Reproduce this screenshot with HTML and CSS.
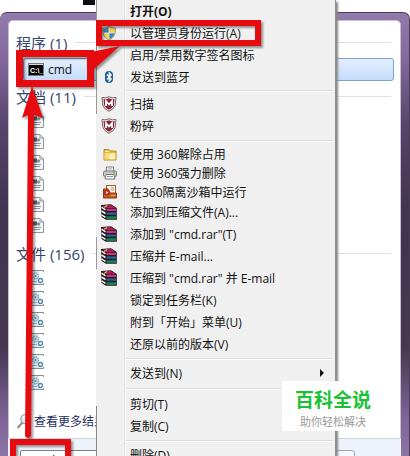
FILE: index.html
```html
<!DOCTYPE html>
<html lang="zh-CN">
<head>
<meta charset="utf-8">
<meta name="viewport" content="width=device-width, initial-scale=1">
<title>cmd</title>
<link rel="stylesheet" href="styles.css">
</head>
<body>
<svg class="defs" aria-hidden="true">
  <symbol id="uac" viewBox="0 0 16 16">
    <path d="M8 1C6 2.500 4 3 1.500 3 1.500 9 3 13 8 15 13 13 14.500 9 14.500 3 12 3 10 2.500 8 1Z" fill="#f3d23c" stroke="#8a97a5"/>
    <path d="M8 2C6 3.300 4 3.700 2.300 3.800L2.600 8H8Z" fill="#3b7cc2"/>
    <path d="M8 8H13.400C12.800 11 11 13 8 14.200Z" fill="#3b7cc2"/>
    <path d="M2.600 8H13.400M8 2V14" stroke="#e8eef2" stroke-width=".8"/>
  </symbol>
  <symbol id="bluetooth" viewBox="0 0 16 16">
    <rect x="4" y="2" width="8" height="12" rx="4" fill="#1d5c94"/>
    <path d="M5.800 5.500 10.300 10 8.200 12.200V3.800L10.300 6 5.800 10.500" fill="none" stroke="#fff" stroke-width="1.200"/>
  </symbol>
  <symbol id="shield" viewBox="0 0 16 16">
    <path d="M1 1.500Q4.500 2.500 8 .8 11.500 2.500 15 1.500L14 10Q12.500 13 8 15.300 3.500 13 2 10Z" fill="#f2e9ea" stroke="#776568"/>
    <path d="M2.500 3Q5.500 3.500 8 2.300 10.500 3.500 13.500 3L12.800 9.500Q11.500 12 8 13.800 4.500 12 3.200 9.500Z" fill="#84283a"/>
    <path d="M5 10V5L8 8.500 11 5V10" fill="none" stroke="#fff" stroke-width="1.700"/>
  </symbol>
  <symbol id="folder" viewBox="0 0 16 16">
    <path d="M2 3.500H7L8.500 5H14V14H2Z" fill="#e5b740" stroke="#bd8f2c"/>
    <path d="M2.500 7H13.500V13.500H2.500Z" fill="#f6db77"/>
    <circle cx="10" cy="10.500" r="2" fill="none" stroke="#fffbe0" stroke-width="1.400"/>
    <path d="M8 10Q8.500 7.500 11 7.500M3 5.500H7" fill="none" stroke="#fff3b5"/>
  </symbol>
  <symbol id="printer" viewBox="0 0 16 16">
    <path d="M4.500 6V2H11.500V6" fill="#fff" stroke="#777"/>
    <rect x="1.500" y="6" width="13" height="5.500" rx="1.500" fill="#c9c9c6" stroke="#777"/>
    <path d="M4 9.500H12L13 14H3Z" fill="#fff" stroke="#777"/>
    <path d="M5 11.500H11M6 4H10" stroke="#999"/><path d="M11 7.800H13" stroke="#58a354"/>
  </symbol>
  <symbol id="sandbox" viewBox="0 0 16 16">
    <path d="M4.500 1.500H13.500V11H4.500Z" fill="#fff6e6" stroke="#9a5a2a"/>
    <path d="M9 4H12M9 6H12" stroke="#c78853"/>
    <path d="M1.500 5H6L8 9H14.500V14H1.500Z" fill="#c0601e" stroke="#853814"/>
    <circle cx="5" cy="8.500" r="3" fill="#c5231b"/><path d="M4 7 6.500 8.500 4 10Z" fill="#fff"/>
    <path d="M9 11.500H13.500" stroke="#e8a050"/>
  </symbol>
  <symbol id="rar" viewBox="0 0 16 16">
    <path d="M0 1 10 .3 15.800 4V15.800H5L.5 13Z" fill="#201b25"/>
    <path d="M1.500 1.500 10 1 14.500 4H5.500Z" fill="#a81f55"/>
    <path d="M5.500 4.700H15V7H5.500Z" fill="#d52d78"/>
    <path d="M5.500 8.500H15V10.700H5.500Z" fill="#27689a"/>
    <path d="M5.500 12.300H15V14.800H5.500Z" fill="#168651"/>
    <path d="M.5 3.200 4.500 5.800M.5 7 4.500 9.500M.5 10.800 4.500 13.300" stroke="#f5efe6" stroke-width="1.500"/>
    <path d="M3 3.500 6 1.500" fill="none" stroke="#e2b13c" stroke-width="1.300"/>
  </symbol>
  <symbol id="script" viewBox="0 0 13 15">
    <path d="M.5 .5H9L12.500 4V14.500H.5Z" fill="#f4f6f7" stroke="#8e979d"/>
    <path d="M9 .5V4H12.500" fill="none" stroke="#8e979d"/>
    <path d="M2 3.500H6V7.500H2Z" fill="#55646e"/><circle cx="7.500" cy="6" r="1.700" fill="#84939c"/>
    <path d="M2 9.500H10M2 11.500H9" stroke="#8b989f"/>
  </symbol>
  <symbol id="config" viewBox="0 0 13 15">
    <path d="M0 .5H12.500M0 14.500H12.500M12.500 .5V2M12.500 13V14.500" stroke="#7d8f9b" fill="none"/>
    <path d="M.5 1H8V14H.5Z" fill="#dbe8ef"/>
    <circle cx="4.500" cy="6" r="3" fill="#c4dce9" stroke="#5c88a2" stroke-dasharray="1.500 .8"/>
    <circle cx="4.500" cy="6" r="1" fill="#5c88a2"/>
    <circle cx="9.500" cy="10.500" r="2" fill="#fff" stroke="#4f86a8" stroke-width="1.300"/>
    <path d="M1 11.500H6" stroke="#8fabbb"/>
  </symbol>
</svg>

<div class="desktop">
  <div class="tile"></div>
  <section class="start">
    <div class="results">
      <h2>程序 (1)</h2>
      <button class="result" type="button">
        <svg class="console" viewBox="0 0 16 13" aria-hidden="true">
          <rect x=".5" y=".5" width="15" height="12" fill="#050505" stroke="#777"/>
          <path d="M1 1.500H15" stroke="#d4d8dc"/>
          <text x="2" y="10" class="prompt">C:\_</text>
        </svg>
        cmd
      </button>
      <h2>文档 (11)</h2>
      <div class="files">
        <svg><use href="#script"/></svg><svg><use href="#script"/></svg><svg><use href="#script"/></svg>
        <svg><use href="#script"/></svg><svg><use href="#script"/></svg><svg><use href="#script"/></svg>
      </div>
      <h2>文件 (156)</h2>
      <div class="files">
        <svg><use href="#config"/></svg><svg><use href="#config"/></svg><svg><use href="#config"/></svg>
        <svg><use href="#config"/></svg><svg><use href="#config"/></svg><svg><use href="#config"/></svg>
      </div>
      <a class="more" href="#">
        <svg viewBox="0 0 16 16" aria-hidden="true">
          <path d="M6.500 9.500 1.500 15" stroke="#9b8b78" stroke-width="2"/>
          <circle cx="9.500" cy="6" r="4.700" fill="#dcecf7" stroke="#93a5b5" stroke-width="1.300"/>
          <path d="M7 5Q8 3 10 3" fill="none" stroke="#fff" stroke-width="1.200"/>
        </svg>查看更多结果</a>
    </div>
    <div class="searchbar">
      <input type="text" value="cmd" aria-label="搜索程序和文件">
      <button type="button" aria-label="关机"></button>
    </div>
  </section>

  <div class="menu" role="menu">
    <button type="button" role="menuitem" class="default">打开(O)</button>
    <button type="button" role="menuitem"><svg><use href="#uac"/></svg>以管理员身份运行(A)</button>
    <button type="button" role="menuitem">启用/禁用数字签名图标</button>
    <button type="button" role="menuitem"><svg><use href="#bluetooth"/></svg>发送到蓝牙</button>
    <hr class="tight">
    <button type="button" role="menuitem"><svg><use href="#shield"/></svg>扫描</button>
    <button type="button" role="menuitem"><svg><use href="#shield"/></svg>粉碎</button>
    <hr>
    <button type="button" role="menuitem" class="compact"><svg><use href="#folder"/></svg>使用 360解除占用</button>
    <button type="button" role="menuitem" class="compact"><svg><use href="#printer"/></svg>使用 360强力删除</button>
    <button type="button" role="menuitem" class="compact"><svg><use href="#sandbox"/></svg>在360隔离沙箱中运行</button>
    <button type="button" role="menuitem"><svg><use href="#rar"/></svg>添加到压缩文件(A)...</button>
    <button type="button" role="menuitem"><svg><use href="#rar"/></svg>添加到 "cmd.rar"(T)</button>
    <button type="button" role="menuitem"><svg><use href="#rar"/></svg>压缩并 E-mail...</button>
    <button type="button" role="menuitem"><svg><use href="#rar"/></svg>压缩到 "cmd.rar" 并 E-mail</button>
    <button type="button" role="menuitem">锁定到任务栏(K)</button>
    <button type="button" role="menuitem">附到「开始」菜单(U)</button>
    <button type="button" role="menuitem">还原以前的版本(V)</button>
    <hr>
    <button type="button" role="menuitem" class="parent">发送到(N)</button>
    <hr class="wide">
    <button type="button" role="menuitem">剪切(T)</button>
    <button type="button" role="menuitem">复制(C)</button>
    <hr>
    <button type="button" role="menuitem">删除(D)</button>
  </div>

  <svg class="marks" viewBox="0 0 410 456" aria-hidden="true">
    <g fill="none" stroke="#e60b0f" stroke-width="6">
      <rect x="19.500" y="53.500" width="71" height="30" stroke-width="7"/>
      <rect x="99" y="23" width="159" height="20"/>
      <rect x="13" y="442" width="55" height="30"/>
    </g>
    <path d="M86 53 120 46 93 70Z" fill="#e60b0f"/>
    <path d="M32 86 43 118 34 115 31 436Q28 440 25 436L28 115 22 118Z" fill="#e60b0f"/>
  </svg>

  <aside class="brand"><strong>百科全说</strong><span>助你轻松解决</span></aside>
</div>
</body>
</html>
```
FILE: styles.css
```css
* { box-sizing: border-box; }

body {
  margin: 0;
  background: #fff;
  color: #111;
  font-family: "Open Sans", "Noto Sans CJK SC", sans-serif;
  font-size: 12px;
}

button, input { font: inherit; color: inherit; }

.defs { position: absolute; width: 0; height: 0; }

.desktop {
  position: relative;
  display: flex;
  flex-direction: column;
  height: 100vh;
  overflow: hidden;
}

.tile {
  flex: none;
  width: 12px;
  height: 5px;
  margin: 0 0 7px 83px;
  background: #0b0b10;
}

/* Start menu glass frame */
.start {
  flex: 1;
  display: flex;
  flex-direction: column;
  min-height: 0;
  padding: 7px 8px 0;
  border: 1px solid #4a3b57;
  border-width: 1px 1px 0 0;
  border-radius: 7px 7px 0 0;
  background: linear-gradient(#927aab 0, #846a9d 10%, #54446a 26%, #41344f 45%, #44374f 75%, #80669a 92%, #8d75a6 100%);
}

.results {
  flex: 1;
  padding: 11px 9px 0 7px;
  border: 1px solid #c9bdd4;
  border-bottom: 0;
  border-radius: 5px 5px 0 0;
  background: #fff;
}

h2 {
  display: flex;
  align-items: center;
  gap: 8px;
  height: 20px;
  margin: 0;
  color: #35456f;
  font-size: 15px;
  font-weight: 400;
}

h2::after {
  content: "";
  flex: 1;
  height: 1px;
  background: #dcdfe4;
}

.result {
  display: flex;
  align-items: center;
  gap: 4px;
  width: calc(100% - 4px);
  height: 23px;
  margin: 6px 0 5px 7px;
  padding: 0 4px;
  border: 1px solid #7da2ce;
  border-radius: 3px;
  background: linear-gradient(#e4effd, #c3dcfb);
  font-size: 12px;
}

.console { width: 16px; height: 13px; }

.prompt {
  fill: #fff;
  font: bold 7px "Liberation Sans", sans-serif;
}

.files {
  display: grid;
  gap: 6px;
  padding: 7px 0 10px 15px;
}

.files svg { display: block; width: 13px; height: 15px; }

.more {
  display: flex;
  align-items: center;
  gap: 2px;
  margin-top: 12px;
  color: #1d2f62;
  text-decoration: none;
}

.more svg { width: 16px; height: 16px; }

.searchbar {
  flex: none;
  display: flex;
  gap: 12px;
  height: 18px;
  padding: 11px 46px 0 12px;
  border-top: 1px solid #cbd5e4;
  background: #eef3fb;
}

.searchbar input {
  flex: 1;
  min-width: 0;
  height: 20px;
  padding: 0 10px;
  border: 1px solid #777f89;
  border-radius: 2px;
  background: #fff;
}

.searchbar button {
  width: 60px;
  height: 24px;
  border: 1px solid #9ba5b1;
  border-radius: 3px;
  background: #f4f7fc;
}

/* Context menu lies over the start menu */
.menu {
  position: absolute;
  top: 0;
  bottom: 0;
  left: 96px;
  width: 240px;
  overflow: hidden;
  border-right: 1px solid #8d8d8d;
  background: linear-gradient(90deg, #f0f0f0 28px, #e0e0e0 28px, #e0e0e0 29px, #fafafa 29px, #fafafa 30px, #f0f0f0 30px);
  box-shadow: 2px 2px 2px #888;
}

/* Broken edge line on the menu's left side */
.menu::before {
  content: "";
  position: absolute;
  inset: 0 auto 0 0;
  width: 1px;
  background: linear-gradient(#999 25%, #f0f0f0 25%, #f0f0f0 52%, #999 52%, #999 59%, #f0f0f0 59%, #f0f0f0 89%, #888 89%);
}

.menu button {
  display: flex;
  align-items: center;
  width: 100%;
  height: 22px;
  padding: 0 8px 0 34px;
  border: 0;
  background: none;
  text-align: left;
  white-space: nowrap;
}

.menu button.compact { height: 19px; }
.menu button.default { font-weight: 700; }

.menu svg {
  flex: none;
  width: 16px;
  height: 16px;
  margin: 0 13px 0 -29px;
}

.menu .compact svg { margin: 0 12px 0 -28px; }

.menu hr {
  height: 7px;
  margin: 0 2px 0 30px;
  border: 0;
  background: linear-gradient(#dcdcdc 50%, #fff 50%) center / 100% 2px no-repeat;
}

.menu hr.tight { height: 5px; }
.menu hr.wide { height: 9px; }

.parent::after {
  content: "";
  margin-left: auto;
  margin-right: 3px;
  border: 4px solid transparent;
  border-left-color: #111;
  border-right-width: 0;
}

.marks {
  position: absolute;
  top: 0;
  left: 0;
  width: 410px;
  height: 456px;
  filter: drop-shadow(2px 2px 1px #0006);
  pointer-events: none;
}

.brand {
  position: absolute;
  right: 26px;
  bottom: 25px;
  display: flex;
  flex-direction: column;
  align-items: center;
  padding: 6px 13px 1px;
  background: #fff;
  color: #999;
  font-size: 11px;
  line-height: 16px;
}

.brand strong {
  color: #18c232;
  font-size: 19px;
  line-height: 27px;
}
```
